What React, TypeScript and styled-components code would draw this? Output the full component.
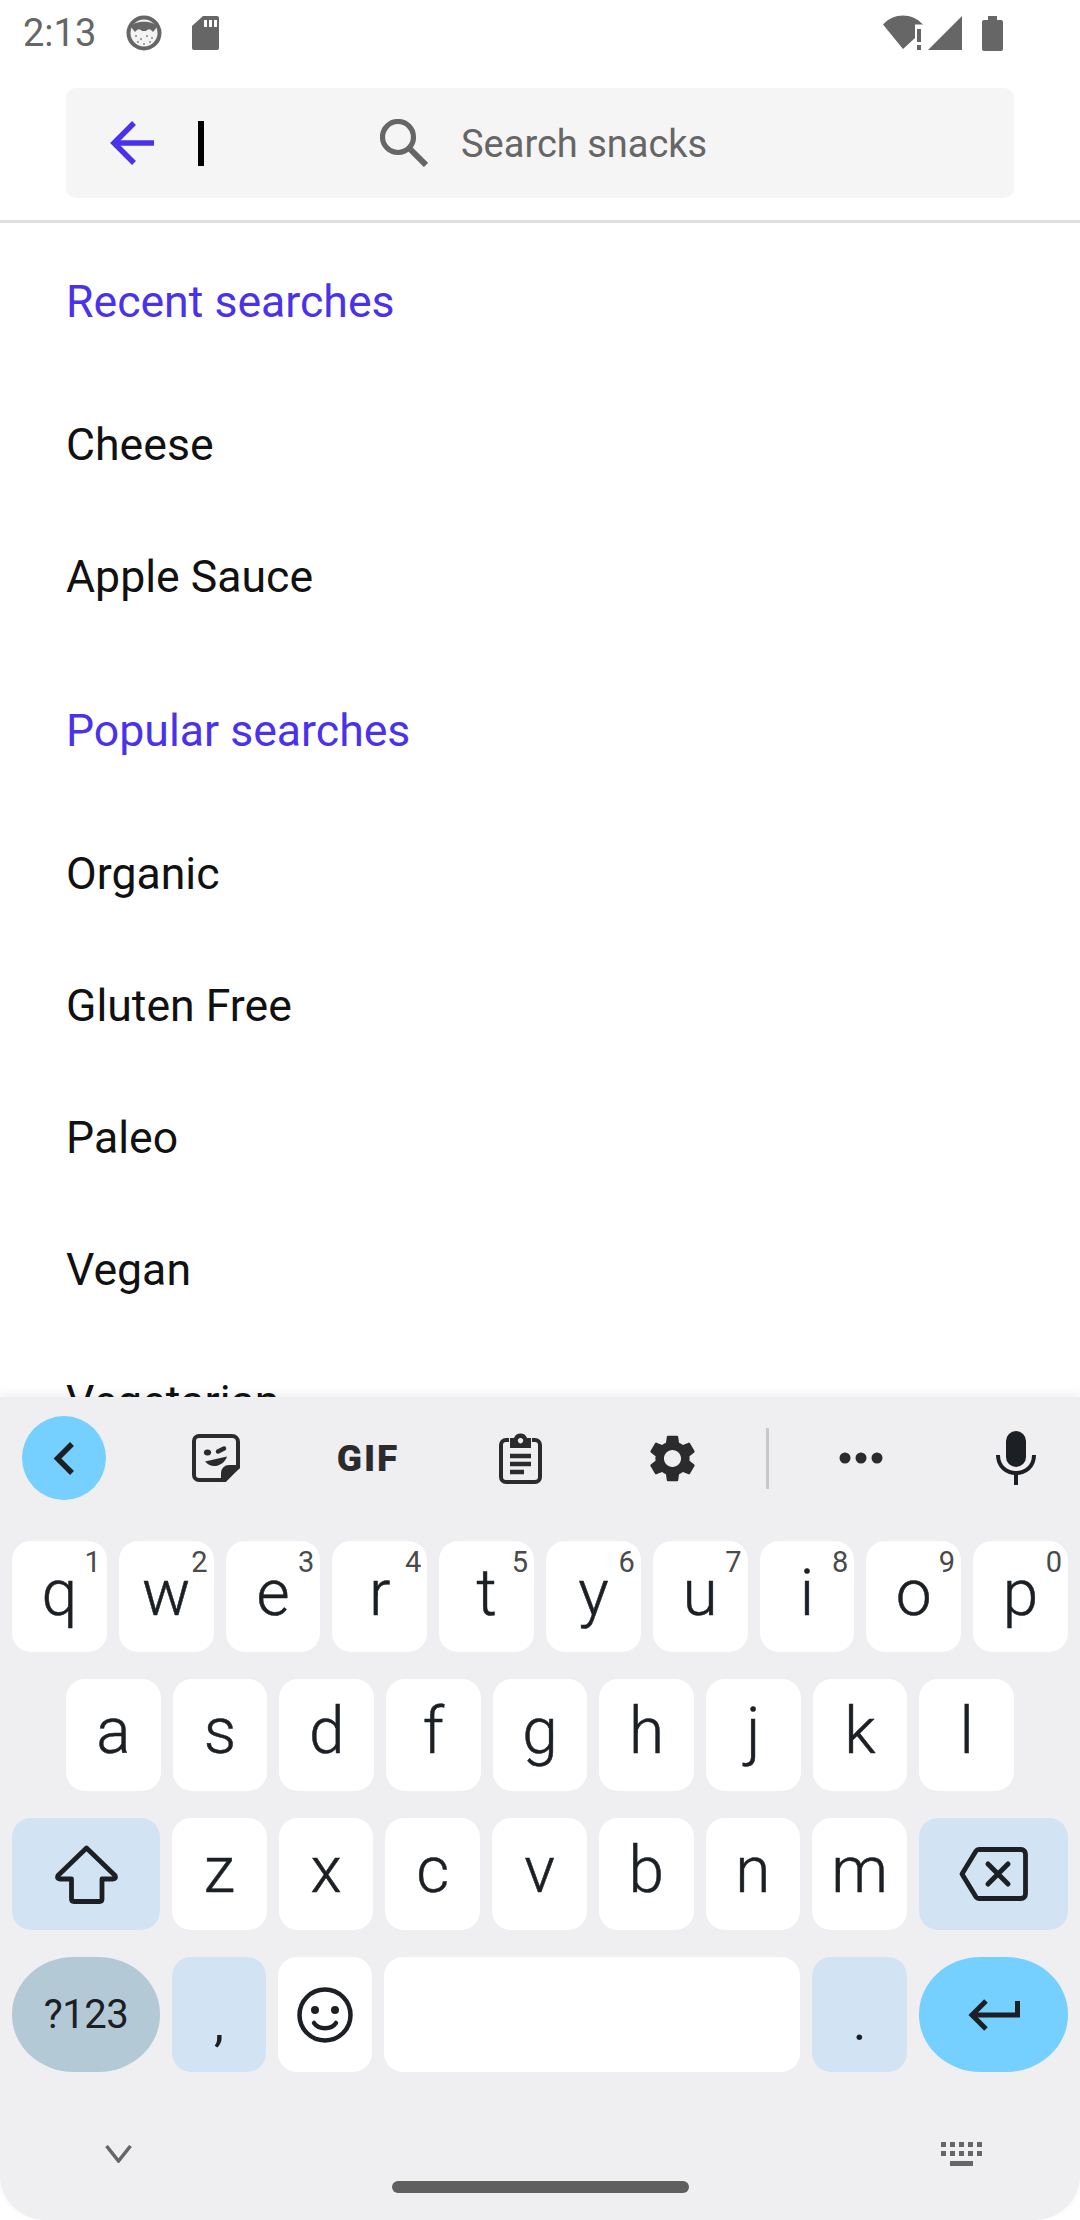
import styled, { createGlobalStyle } from "styled-components";

const GlobalStyle = createGlobalStyle`
  html, body { margin: 0; padding: 0; background: #fff; }
  * { box-sizing: border-box; }
`;

const Screen = styled.div`
  width: 1080px;
  height: 2220px;
  display: flex;
  flex-direction: column;
  overflow: hidden;
  background: #fff;
  font-family: Roboto, "Liberation Sans", sans-serif;
`;

// status bar
const Header = styled.header`
  height: 223px;
  flex: none;
  border-bottom: 3px solid #e0e0e0;
`;
const StatusBar = styled.div`
  height: 66px;
  display: flex;
  align-items: center;
  padding: 0 77px 0 23px;
  color: #666;
`;
const Time = styled.span`
  font-size: 38px;
  width: 103px;
  line-height: 66px;
`;
const StatusGroup = styled.div<{ $gap: number; $right?: number }>`
  display: flex;
  align-items: center;
  gap: ${(p) => p.$gap}px;
  margin-right: ${(p) => p.$right ?? 0}px;
`;
const Spacer = styled.div`
  flex: 1;
`;

// search box
const SearchBox = styled.div`
  height: 110px;
  margin: 22px 66px 0;
  background: #f5f5f5;
  border-radius: 10px;
  display: flex;
  align-items: center;
  padding-left: 44px;
`;
const Caret = styled.div`
  width: 6px;
  height: 45px;
  margin: 0 176px 0 44px;
  background: #000;
`;
const Placeholder = styled.span`
  margin: 2px 0 0 33px;
  font-size: 38px;
  color: #666;
`;

// list
const List = styled.div`
  flex: 1;
  min-height: 0;
  overflow: hidden;
`;
const SectionTitle = styled.div<{ $first?: boolean }>`
  height: 155px;
  margin-top: ${(p) => (p.$first ? 0 : 10)}px;
  padding: 2px 0 0 66px;
  display: flex;
  align-items: center;
  font-size: 44.6px;
  color: #4a32ea;
`;
const Item = styled.div`
  height: 132px;
  padding: 2px 0 0 66px;
  display: flex;
  align-items: center;
  font-size: 44.6px;
  color: #111;
`;

// keyboard
const Keyboard = styled.div`
  height: 823px;
  flex: none;
  position: relative;
  background: #efeff1;
  border-radius: 0 0 45px 45px;
  box-shadow: 0 -3px 10px rgba(0, 0, 0, 0.07);
  padding-top: 19px;
`;
const Toolbar = styled.div`
  height: 84px;
  display: flex;
  align-items: center;
  padding-left: 22px;
  margin-bottom: 41px;
`;
const CollapseButton = styled.div`
  width: 84px;
  height: 84px;
  margin-right: 34px;
  border-radius: 50%;
  background: #75cfff;
  display: flex;
  align-items: center;
  justify-content: center;
`;
const ToolSlot = styled.div<{ $w: number }>`
  width: ${(p) => p.$w}px;
  display: flex;
  align-items: center;
  justify-content: center;
`;
const GifLabel = styled.span`
  font-size: 37px;
  font-weight: 900;
  letter-spacing: 2px;
  color: #2b2b2d;
  line-height: 1;
`;
const ToolDivider = styled.div`
  width: 3px;
  height: 61px;
  margin-left: 18px;
  background: #c9c9cb;
`;
const Rows = styled.div`
  display: flex;
  flex-direction: column;
  gap: 27px;
  padding: 0 12px;
`;
const Row = styled.div<{ $h: number; $inset?: number }>`
  height: ${(p) => p.$h}px;
  display: flex;
  gap: 12px;
  padding: 0 ${(p) => p.$inset ?? 0}px;
`;
const Key = styled.div<{ $w?: number; $bg?: string; $round?: boolean }>`
  position: relative;
  flex: ${(p) => (p.$w ? `0 0 ${p.$w}px` : "1 1 0")};
  min-width: 0;
  background: ${(p) => p.$bg ?? "#fff"};
  border-radius: ${(p) => (p.$round ? "62px / 57px" : "19px")};
  display: flex;
  align-items: center;
  justify-content: center;
  color: #1c2024;
`;
const Letter = styled.span`
  font-size: 64px;
  font-weight: 300;
  line-height: 1;
  margin-top: -6px;
  -webkit-text-stroke: 0.5px #1c2024;
`;
const Hint = styled.span`
  position: absolute;
  top: 7px;
  right: 6px;
  font-size: 29px;
  line-height: 1;
  color: #4a4a4c;
`;
const ModeLabel = styled.span`
  font-size: 40px;
  letter-spacing: -0.5px;
  color: #1c2024;
`;
const Punct = styled.span`
  font-size: 50px;
  line-height: 1;
  margin-top: 17px;
`;
const Footer = styled.div`
  padding-top: 58px;
  display: flex;
  flex-direction: column;
  align-items: center;
`;
const NavRow = styled.div`
  width: 100%;
  height: 48px;
  display: flex;
  align-items: center;
  justify-content: space-between;
  padding: 0 97px 0 105px;
`;
const HomeBar = styled.div`
  width: 297px;
  height: 12px;
  margin-top: 3px;
  border-radius: 6px;
  background: #5f5f5f;
`;

const FaceIcon = () => (
  <svg width="36" height="36" viewBox="0 0 36 36">
    <circle cx="18" cy="18" r="15.5" fill="#f3f3f3" stroke="#666" strokeWidth="4" />
    <path d="M5 12C8 5 28 5 31 12L27 17C24 13 22 14 20 16H16C14 14 12 13 9 17Z" fill="#666" />
    <g fill="#888">
      <circle cx="10" cy="21" r="1" />
      <circle cx="15" cy="24" r="1" />
      <circle cx="21" cy="21" r="1" />
      <circle cx="26" cy="23" r="1" />
      <circle cx="18" cy="29" r="1" />
      <circle cx="12" cy="27" r="1" />
      <circle cx="24" cy="27" r="1" />
    </g>
  </svg>
);

const SdIcon = () => (
  <svg width="27" height="34" viewBox="0 0 27 34">
    <path d="M11 0H25a2 2 0 0 1 2 2V32a2 2 0 0 1-2 2H2a2 2 0 0 1-2-2V10Z" fill="#666" />
    <path d="M12 4h3v7h-3zM17 4h3v7h-3zM22 4h3v7h-3z" fill="#fff" />
  </svg>
);

const WifiIcon = () => (
  <svg width="42" height="36" viewBox="0 0 42 36">
    <path d="M0 9.500C11-2.500 29-2.500 40 9.500H32V23L20 34Z" fill="#666" />
    <path d="M34 14h4v13h-4zM34 30h4v5h-4z" fill="#666" />
  </svg>
);

const SignalIcon = () => (
  <svg width="34" height="34" viewBox="0 0 34 34">
    <path d="M34 0V34H0Z" fill="#666" />
  </svg>
);

const BatteryIcon = () => (
  <svg width="21" height="35" viewBox="0 0 21 35">
    <path d="M6 0H15V4H19a2 2 0 0 1 2 2V33a2 2 0 0 1-2 2H2a2 2 0 0 1-2-2V6a2 2 0 0 1 2-2H6Z" fill="#666" />
  </svg>
);

const BackArrow = () => (
  <svg width="44" height="44" viewBox="0 0 44 44" fill="none" stroke="#4a32ea" strokeWidth="5.500">
    <path d="M44 22H4" />
    <path d="M24 2L4 22L24 42" />
  </svg>
);

const SearchIcon = () => (
  <svg width="48" height="48" viewBox="0 0 48 48" fill="none" stroke="#666">
    <circle cx="18" cy="18" r="15.500" strokeWidth="5.200" />
    <path d="M30 30L46 46" strokeWidth="6" />
  </svg>
);

const ChevronLeft = () => (
  <svg width="22" height="33" viewBox="0 0 22 33" fill="none" stroke="#1c2024" strokeWidth="5.500">
    <path d="M19 2L4.500 16.500L19 31" />
  </svg>
);

const StickerIcon = () => (
  <svg width="48" height="48" viewBox="0 0 48 48" fill="none" stroke="#2b2b2d" strokeWidth="4">
    <path d="M7 2H40a6 6 0 0 1 6 6V33L33 46H7a5 5 0 0 1-5-5V7a5 5 0 0 1 5-5Z" />
    <path d="M46 33H37a6 6 0 0 0-6 6V46Z" fill="#2b2b2d" />
    <ellipse cx="15.500" cy="18.500" rx="3.600" ry="3" fill="#2b2b2d" stroke="none" />
    <path d="M26 17.500L32 14.500" strokeWidth="4.500" strokeLinecap="round" />
    <path d="M13 27.500L35 22.500C33 30 21 37 13 27.500Z" fill="#2b2b2d" stroke="none" />
  </svg>
);

const ClipboardIcon = () => (
  <svg width="43" height="51" viewBox="0 0 43 51" fill="none" stroke="#2b2b2d" strokeWidth="4">
    <path d="M10 7H7a5 5 0 0 0-5 5V44a5 5 0 0 0 5 5H36a5 5 0 0 0 5-5V12a5 5 0 0 0-5-5H33" />
    <path d="M11 5H15a7 7 0 0 1 13 0H32V15H11ZM21.500 5a2.700 2.700 0 1 0 .01 0Z" fill="#2b2b2d" fillRule="evenodd" stroke="none" />
    <path d="M11 23H32M11 31H32M11 39H25" strokeWidth="4.500" />
  </svg>
);

const GearIcon = () => (
  <svg width="57" height="57" viewBox="0 0 24 24" fill="#2b2b2d">
    <path d="M19.14 12.94c.04-.3.06-.61.06-.94 0-.32-.02-.64-.07-.94l2.03-1.58c.18-.14.23-.41.12-.61l-1.920-3.320c-.12-.22-.37-.29-.59-.22l-2.390.96c-.5-.38-1.030-.7-1.620-.94l-.36-2.540c-.04-.24-.24-.41-.48-.41h-3.840c-.24 0-.43.17-.47.41l-.36 2.540c-.59.24-1.130.57-1.620.94l-2.390-.96c-.22-.08-.47 0-.59.22L2.740 8.870c-.12.21-.08.47.12.61l2.030 1.580c-.05.3-.09.63-.09.94s.02.64.07.94l-2.030 1.580c-.18.14-.23.41-.12.61l1.920 3.320c.12.22.37.29.59.22l2.390-.96c.5.38 1.030.7 1.620.94l.36 2.54c.05.24.24.41.48.41h3.840c.24 0 .44-.17.47-.41l.36-2.540c.59-.24 1.130-.56 1.620-.94l2.390.96c.22.08.47 0 .59-.22l1.920-3.320c.12-.22.07-.47-.12-.61l-2.010-1.580zM12 15.600c-1.980 0-3.600-1.620-3.600-3.600s1.620-3.600 3.600-3.600 3.600 1.620 3.600 3.600-1.620 3.600-3.600 3.600z" />
  </svg>
);

const DotsIcon = () => (
  <svg width="44" height="12" viewBox="0 0 44 12" fill="#2b2b2d">
    <circle cx="6" cy="6" r="5.500" />
    <circle cx="22" cy="6" r="5.500" />
    <circle cx="38" cy="6" r="5.500" />
  </svg>
);

const MicIcon = () => (
  <svg width="40" height="54" viewBox="0 0 40 54" fill="none" stroke="#1c2024" strokeWidth="4">
    <rect x="10" y="0" width="20" height="36" rx="10" fill="#1c2024" stroke="none" />
    <path d="M2 24C2 48 38 48 38 24" />
    <path d="M20 40V54" />
  </svg>
);

const ShiftIcon = () => (
  <svg width="63" height="59" viewBox="0 0 63 59" fill="none" stroke="#1c2024" strokeWidth="4.800" strokeLinejoin="round">
    <path d="M31.500 3L60 30.500Q61.500 34 58 34H47V54Q47 56.500 44.500 56.500H19Q16.500 56.500 16.500 54V34H5Q1.500 34 3 30.500Z" />
  </svg>
);

const DeleteIcon = () => (
  <svg width="69" height="54" viewBox="0 0 69 54" fill="none" stroke="#1c2024" strokeWidth="4.800" strokeLinejoin="round">
    <path d="M20 2.500H62a4.500 4.500 0 0 1 4.500 4.500V47a4.500 4.500 0 0 1-4.500 4.500H20Q18 51.500 17 50L3 27L17 4Q18 2.500 20 2.500Z" />
    <path d="M29 17L49 37M49 17L29 37" strokeWidth="5" strokeLinecap="round" />
  </svg>
);

const EmojiIcon = () => (
  <svg width="56" height="56" viewBox="0 0 56 56" fill="none" stroke="#1c2024" strokeWidth="4.500">
    <circle cx="28" cy="28" r="25.500" />
    <circle cx="18" cy="23" r="4" fill="#1c2024" stroke="none" />
    <circle cx="38" cy="23" r="4" fill="#1c2024" stroke="none" />
    <path d="M17 36C22 43 34 43 39 36" strokeLinecap="round" />
  </svg>
);

const EnterIcon = () => (
  <svg width="52" height="32" viewBox="0 0 52 32" fill="none" stroke="#1c2024" strokeWidth="5">
    <path d="M49.500 2V16H4" />
    <path d="M18 2L4 16L18 30" />
  </svg>
);

const NavChevron = () => (
  <svg width="27" height="18" viewBox="0 0 27 18" fill="none" stroke="#666" strokeWidth="3.500">
    <path d="M1.500 1L13.500 16L25.500 1" />
  </svg>
);

const KeyboardIcon = () => (
  <svg width="42" height="24" viewBox="0 0 42 24" fill="#666">
    {[0, 9, 18, 27, 36].map((x) => (
      <g key={x}>
        <rect x={x} y="0" width="5" height="5" />
        <rect x={x} y="9" width="5" height="5" />
      </g>
    ))}
    <rect x="9" y="19" width="23" height="5" />
  </svg>
);

const topRow = [
  ["q", "1"],
  ["w", "2"],
  ["e", "3"],
  ["r", "4"],
  ["t", "5"],
  ["y", "6"],
  ["u", "7"],
  ["i", "8"],
  ["o", "9"],
  ["p", "0"],
];
const recent = ["Cheese", "Apple Sauce"];
const popular = ["Organic", "Gluten Free", "Paleo", "Vegan", "Vegetarian"];
const SPECIAL = "#d2e4f4";

export default function App() {
  return (
    <Screen>
      <GlobalStyle />
      <Header>
        <StatusBar>
          <Time>2:13</Time>
          <StatusGroup $gap={30}>
            <FaceIcon />
            <SdIcon />
          </StatusGroup>
          <Spacer />
          <StatusGroup $gap={3} $right={20}>
            <WifiIcon />
            <SignalIcon />
          </StatusGroup>
          <BatteryIcon />
        </StatusBar>
        <SearchBox>
          <BackArrow />
          <Caret />
          <SearchIcon />
          <Placeholder>Search snacks</Placeholder>
        </SearchBox>
      </Header>

      <List>
        <SectionTitle $first>Recent searches</SectionTitle>
        {recent.map((t) => (
          <Item key={t}>{t}</Item>
        ))}
        <SectionTitle>Popular searches</SectionTitle>
        {popular.map((t) => (
          <Item key={t}>{t}</Item>
        ))}
      </List>

      <Keyboard>
        <Toolbar>
          <CollapseButton>
            <ChevronLeft />
          </CollapseButton>
          <ToolSlot $w={152}>
            <StickerIcon />
          </ToolSlot>
          <ToolSlot $w={152}>
            <GifLabel>GIF</GifLabel>
          </ToolSlot>
          <ToolSlot $w={152}>
            <ClipboardIcon />
          </ToolSlot>
          <ToolSlot $w={152}>
            <GearIcon />
          </ToolSlot>
          <ToolDivider />
          <ToolSlot $w={184}>
            <DotsIcon />
          </ToolSlot>
          <ToolSlot $w={126}>
            <MicIcon />
          </ToolSlot>
        </Toolbar>

        <Rows>
          <Row $h={111}>
            {topRow.map(([l, n]) => (
              <Key key={l}>
                <Letter>{l}</Letter>
                <Hint>{n}</Hint>
              </Key>
            ))}
          </Row>
          <Row $h={112} $inset={54}>
            {"asdfghjkl".split("").map((l) => (
              <Key key={l}>
                <Letter>{l}</Letter>
              </Key>
            ))}
          </Row>
          <Row $h={112}>
            <Key $w={148} $bg={SPECIAL}>
              <ShiftIcon />
            </Key>
            {"zxcvbnm".split("").map((l) => (
              <Key key={l}>
                <Letter>{l}</Letter>
              </Key>
            ))}
            <Key $w={149} $bg={SPECIAL}>
              <DeleteIcon />
            </Key>
          </Row>
          <Row $h={115}>
            <Key $w={148} $bg="#b3c9d6" $round>
              <ModeLabel>?123</ModeLabel>
            </Key>
            <Key $w={94} $bg={SPECIAL}>
              <Punct>,</Punct>
            </Key>
            <Key $w={94}>
              <EmojiIcon />
            </Key>
            <Key />
            <Key $w={95} $bg={SPECIAL}>
              <Punct>.</Punct>
            </Key>
            <Key $w={149} $bg="#75cfff" $round>
              <EnterIcon />
            </Key>
          </Row>
        </Rows>

        <Footer>
          <NavRow>
            <NavChevron />
            <KeyboardIcon />
          </NavRow>
          <HomeBar />
        </Footer>
      </Keyboard>
    </Screen>
  );
}
